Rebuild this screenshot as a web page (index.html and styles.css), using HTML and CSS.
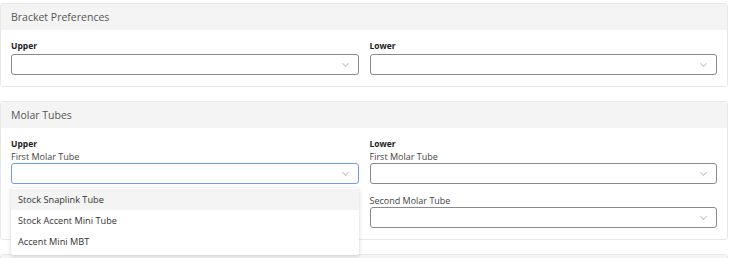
FILE: index.html
```html
<!DOCTYPE html>
<html lang="en">

<head>
    <meta charset="UTF-8">
    <title>Preferences</title>
    <link rel="stylesheet" href="styles.css">
</head>

<body>
    <div class="page">
        <div class="card">
            <div class="card-header">Bracket Preferences</div>
            <div class="card-body grid">
                <div class="field">
                    <label class="label">Upper</label>
                    <div class="select"><span class="chevron"></span></div>
                </div>
                <div class="field">
                    <label class="label">Lower</label>
                    <div class="select"><span class="chevron"></span></div>
                </div>
            </div>
        </div>

        <div class="card">
            <div class="card-header">Molar Tubes</div>
            <div class="card-body grid">
                <div class="field">
                    <label class="label">Upper</label>
                    <div class="sub-label">First Molar Tube</div>
                    <div class="select-wrap">
                        <div class="select focused"><span class="chevron"></span></div>
                        <ul class="menu">
                            <li class="active">Stock Snaplink Tube</li>
                            <li>Stock Accent Mini Tube</li>
                            <li>Accent Mini MBT</li>
                        </ul>
                    </div>
                </div>
                <div class="field">
                    <label class="label">Lower</label>
                    <div class="sub-label">First Molar Tube</div>
                    <div class="select"><span class="chevron"></span></div>
                    <div class="sub-label spaced">Second Molar Tube</div>
                    <div class="select"><span class="chevron"></span></div>
                </div>
            </div>
        </div>

        <div class="card">
            <div class="card-header">&nbsp;</div>
        </div>
    </div>
</body>

</html>
```

FILE: styles.css
```css
html,
body {
    margin: 0;
    padding: 0;
    background: #fff;
}

body {
    font-family: "Open Sans", "Noto Sans", sans-serif;
    color: #333;
    overflow: hidden;
    height: 258px;
}

.page {
    padding: 3px 3px 0 0;
    display: flex;
    flex-direction: column;
    gap: 14px;
}

.card {
    border: 1px solid #e8e8e8;
    border-radius: 3px;
    background: #fff;
}

.card-header {
    background: #f4f4f4;
    height: 26px;
    line-height: 26px;
    padding: 0 10px;
    font-size: 10.5px;
    color: #555;
}

.card-body {
    padding: 9px 10px 11px;
}

.grid {
    display: grid;
    grid-template-columns: 1fr 1fr;
    column-gap: 11px;
}

.field {
    display: flex;
    flex-direction: column;
}

.label {
    font-size: 8.5px;
    font-weight: 700;
    color: #222;
    height: 13px;
    line-height: 13px;
}

.label + .select {
    margin-top: 2px;
}

.sub-label {
    font-size: 9px;
    color: #444;
    height: 13px;
    line-height: 13px;
}

.sub-label.spaced {
    margin-top: 10px;
}

.select-wrap {
    position: relative;
}

.select {
    height: 19px;
    border: 1px solid #8a8a8a;
    border-radius: 3px;
    position: relative;
    background: #fff;
}

.select.focused {
    border-color: #6a9cf0;
}

.chevron {
    position: absolute;
    right: 10px;
    top: 6px;
    width: 4px;
    height: 4px;
    border-right: 1px solid #c4c4c4;
    border-bottom: 1px solid #c4c4c4;
    transform: rotate(45deg);
}

.menu {
    position: absolute;
    top: 25px;
    left: 0;
    right: 0;
    margin: 0;
    padding: 1px 0 3px;
    list-style: none;
    background: #fff;
    box-shadow: 0 1px 4px rgba(0, 0, 0, 0.18);
    border-radius: 2px;
}

.menu li {
    height: 21px;
    line-height: 21px;
    padding: 0 7px;
    font-size: 9.2px;
    color: #333;
}

.menu li.active {
    background: #f4f4f4;
}
```
